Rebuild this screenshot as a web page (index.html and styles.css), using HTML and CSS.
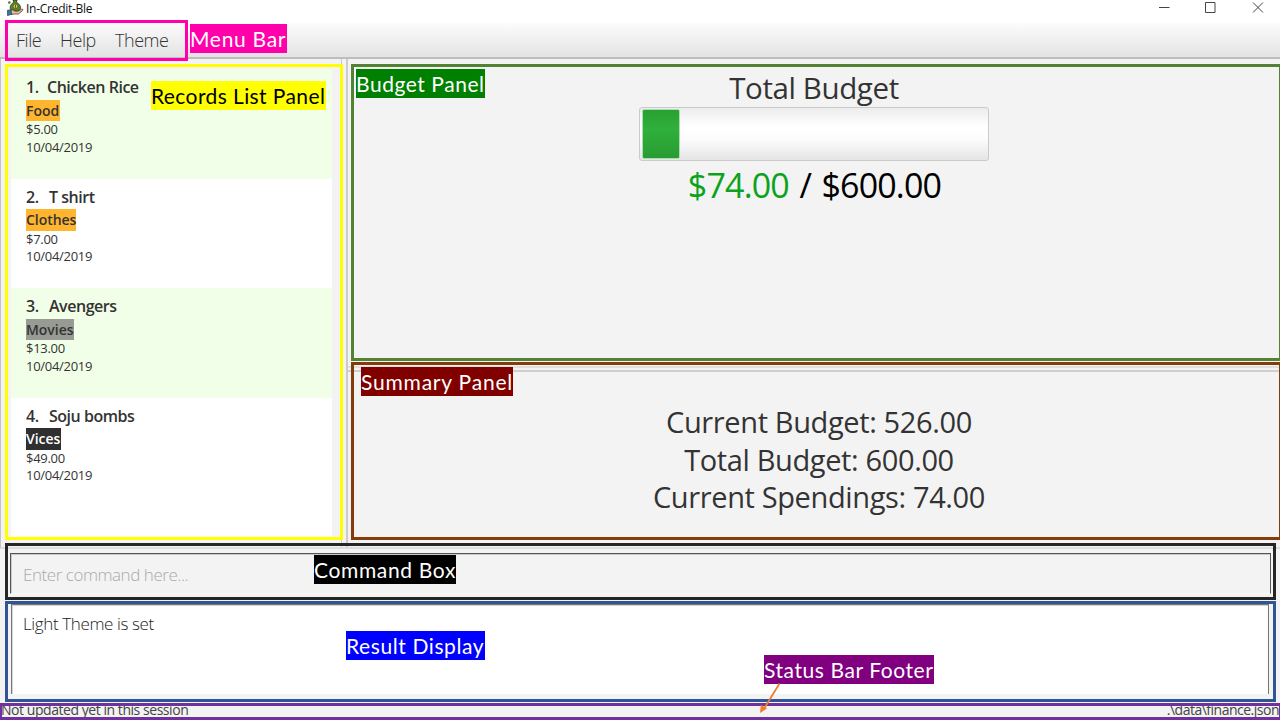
FILE: index.html
```html
<!DOCTYPE html>
<html lang="en">
<head>
<meta charset="utf-8">
<title>In-Credit-Ble</title>
<link rel="stylesheet" href="styles.css">
</head>
<body>
<div class="window">
  <header class="titlebar">
    <svg class="logo" width="17" height="16" viewBox="0 0 17 16">
      <path d="M6 0h4l-.6 2.2C12 3.500 13.800 6 13.500 8.300 13.200 10.200 11.500 11 8.500 11S3.300 10 3.200 8.200C3 6 4.500 3.500 6.800 2.200z" fill="#4f8a2c" stroke="#26301c" stroke-width=".8"/>
      <circle cx="8.500" cy="6.300" r="2.300" fill="#e8c648" stroke="#38501d" stroke-width=".6"/>
      <path d="M8.500 4.800v3" stroke="#4a4a20" stroke-width=".9"/>
      <circle cx="2.300" cy="2.500" r="1.300" fill="#54702f"/>
      <path d="M3.500 10.500c2-1.200 3.500-.3 4.500.7h3l3.500-2c1.300-.5 1.900.5 1 1.400L11.500 14H7l-3 .7z" fill="#eeb88e" stroke="#3c2b24" stroke-width=".7"/>
      <path d="M.3 10.300l3.400-.5 1.100 4.300L.5 15.700z" fill="#2e78a8" stroke="#24313c" stroke-width=".6"/>
    </svg>
    <span class="app-name">In-Credit-Ble</span>
    <div class="controls">
      <svg width="110" height="16" viewBox="0 0 110 16" fill="none" stroke="#444" stroke-width="1">
        <path d="M0 7.500h10.500M46.500 2.500h9.500v10h-9.500zM94 2.500l10 10M104 2.500l-10 10"/>
      </svg>
    </div>
  </header>

  <nav class="menubar">
    <span class="menu-file">File</span><span class="menu-help">Help</span><span>Theme</span>
  </nav>

  <main class="content">
    <section class="records">
      <div class="list">
        <article class="record">
          <h2><span class="index">1.</span>Chicken Rice</h2>
          <span class="tag food">Food</span>
          <p>$5.00</p><p>10/04/2019</p>
        </article>
        <article class="record">
          <h2><span class="index wide">2.</span>T shirt</h2>
          <span class="tag clothes">Clothes</span>
          <p>$7.00</p><p>10/04/2019</p>
        </article>
        <article class="record">
          <h2><span class="index wide">3.</span>Avengers</h2>
          <span class="tag movies">Movies</span>
          <p>$13.00</p><p>10/04/2019</p>
        </article>
        <article class="record">
          <h2><span class="index wide">4.</span>Soju bombs</h2>
          <span class="tag vices">Vices</span>
          <p>$49.00</p><p>10/04/2019</p>
        </article>
      </div>
    </section>
    <div class="divider-v"></div>
    <div class="side">
      <section class="budget">
        <h1>Total Budget</h1>
        <div class="progress"><div class="bar"></div></div>
        <div class="amount"><span class="spent">$74.00</span> / $600.00</div>
      </section>
      <div class="divider-h"></div>
      <section class="summary">
        <div>Current Budget: 526.00</div>
        <div>Total Budget: 600.00</div>
        <div>Current Spendings: 74.00</div>
      </section>
    </div>
  </main>

  <div class="command"><div class="command-field">Enter command here...</div></div>
  <div class="result"><div class="result-field">Light Theme is set</div></div>
  <footer class="statusbar"><span>Not updated yet in this session</span><span class="path">.\data\finance.json</span></footer>

  <div class="frame frame-menu"></div>
  <div class="frame frame-records"></div>
  <div class="frame frame-budget"></div>
  <div class="frame frame-summary"></div>
  <div class="frame frame-command"></div>
  <div class="frame frame-result"></div>
  <div class="frame frame-status"></div>
  <div class="label label-menu">Menu Bar</div>
  <div class="label label-records">Records List Panel</div>
  <div class="label label-budget">Budget Panel</div>
  <div class="label label-summary">Summary Panel</div>
  <div class="label label-command">Command Box</div>
  <div class="label label-result">Result Display</div>
  <div class="label label-status">Status Bar Footer</div>
  <svg class="arrow" width="24" height="32" viewBox="0 0 24 32">
    <path d="M19.500 0.500L4.500 25" stroke="#ed7d31" stroke-width="1.800" fill="none"/>
    <path d="M0 30L0.800 21.800L7 25.600z" fill="#ed7d31"/>
  </svg>
</div>
</body>
</html>
```

FILE: styles.css
```css
* { box-sizing: border-box; }
body { margin: 0; font-family: "Open Sans", "Noto Sans", sans-serif; color: #333; }
h1, h2, p { margin: 0; font-weight: 400; }
.window { position: relative; width: 1280px; height: 720px; overflow: hidden; background: #f3f3f3; display: flex; flex-direction: column; white-space: nowrap; }

.titlebar { height: 23px; background: #fff; display: flex; align-items: flex-start; padding-left: 7px; }
.logo { flex: none; }
.app-name { margin-left: 2px; font-size: 12px; line-height: 17px; letter-spacing: -0.27px; color: #111; }
.controls { margin-left: auto; width: 121px; height: 16px; }
.controls svg { display: block; }

.menubar { height: 36px; flex: none; background: linear-gradient(#fcfcfc, #e3e3e3); border-bottom: 2px solid #bdbdbd; display: flex; padding-left: 16px; font-size: 18px; font-weight: 300; line-height: 35px; letter-spacing: -0.45px; color: #333; }
.menu-file { width: 44px; }
.menu-help { width: 55px; }

.content { height: 490px; flex: none; display: flex; border-left: 1px solid #c4c4c4; border-bottom: 2px solid #dedede; }
.records { width: 341px; padding: 10px 10px 10px 10px; border-right: 1px solid #c8c8c8; }
.list { width: 321px; height: 468px; background: #fff; }
.record { height: 109.5px; padding: 6px 0 0 15px; }
.record:nth-child(odd) { background: #f2ffe8; }
.record h2 { height: 24.5px; line-height: 24px; font-size: 16px; font-weight: 600; letter-spacing: -0.47px; }
.index { display: inline-block; width: 21px; }
.wide { width: 23px; }
.tag { display: block; height: 21.5px; line-height: 21px; font-size: 14px; font-weight: 600; letter-spacing: -0.05px; background: #ffb52e; }
.record p { height: 17.5px; line-height: 17.5px; font-size: 13px; letter-spacing: -0.29px; }
.food { width: 34px; }
.clothes { width: 50px; }
.movies { width: 48px; background: #979b93; }
.vices { width: 35px; background: #2f2f2f; color: #fff; }
.divider-v { width: 6px; background: #f3f3f3; border-right: 2px solid #cbcbcb; }

.side { flex: 1; display: flex; flex-direction: column; }
.budget { height: 307px; display: flex; flex-direction: column; align-items: center; padding-top: 7px; }
.budget h1 { height: 41px; line-height: 43px; font-size: 29.5px; letter-spacing: -0.4px; }
.progress { width: 350px; height: 54px; padding: 1px 2px; border: 1px solid #cbcbcb; border-radius: 3px; background: linear-gradient(#ececec, #fff 35%, #fcfcfc 60%, #e5e5e5); }
.bar { width: 38px; height: 50px; border: 1px solid #a9dfad; border-radius: 2px; background: linear-gradient(#28a032, #30b03c 40%, #289c33); }
.amount { font-size: 34px; line-height: 48px; letter-spacing: -0.85px; word-spacing: 2.5px; color: #000; margin-left: 1px; }
.spent { color: #0ca31c; }
.divider-h { height: 6px; border-top: 2px solid #e0e0e0; border-bottom: 2px solid #cfcfcf; }
.summary { padding: 31px 0 0 10px; text-align: center; font-size: 29px; line-height: 37.5px; letter-spacing: -0.37px; }

.command { height: 51px; flex: none; padding: 4px 9px 0 10px; }
.command-field { height: 41px; border: 1px solid #555; border-bottom-color: #f9f9f9; box-shadow: inset 1px 1px #c9c9c9; padding-left: 12px; font-size: 17px; font-weight: 300; line-height: 41px; letter-spacing: -0.45px; color: #aaa; }
.result { height: 102px; flex: none; padding: 4px 11px 0 11px; }
.result-field { height: 90px; background: #fff; border: 1px solid #777; border-bottom: 0; box-shadow: inset 1px 1px #d5d5d5; padding-left: 11px; font-size: 17px; font-weight: 300; line-height: 38px; letter-spacing: -0.38px; color: #222; }
.statusbar { height: 18px; flex: none; display: flex; justify-content: space-between; padding: 0 1px; font-size: 14px; line-height: 15px; letter-spacing: -0.45px; color: #444; }
.path { letter-spacing: -0.5px; }

/* Coloured outlines over each region */
.frame { position: absolute; border: 3px solid; }
.frame-menu { left: 5px; top: 20px; width: 183px; height: 41px; border-color: #ff00aa; }
.frame-records { left: 5px; top: 64px; width: 338px; height: 476px; border-color: #ff0; }
.frame-budget { left: 351px; top: 64px; width: 931px; height: 297px; border-color: #548235; }
.frame-summary { left: 351px; top: 362px; width: 931px; height: 178px; border-color: #843c0c; }
.frame-command { left: 5px; top: 543px; width: 1271px; height: 57px; border-color: #262626; }
.frame-result { left: 5px; top: 601px; width: 1271px; height: 101px; border-color: #2f5597; }
.frame-status { left: -1px; top: 703px; width: 1283px; height: 17px; border-color: #7030a0; }

/* Region captions */
.label { position: absolute; height: 29px; font: 400 21px/29px Lato, "Open Sans", sans-serif; color: #fff; }
.label-menu { left: 190px; top: 24px; width: 97px; background: #ff00aa; letter-spacing: .7px; }
.label-records { left: 151px; top: 81px; width: 175px; background: #ff0; color: #000; letter-spacing: .4px; }
.label-budget { left: 356px; top: 69px; width: 129px; background: #008000; letter-spacing: .55px; }
.label-summary { left: 361px; top: 367px; width: 152px; background: #800000; letter-spacing: .8px; }
.label-command { left: 314px; top: 555px; width: 142px; background: #000; letter-spacing: .65px; }
.label-result { left: 346px; top: 631px; width: 139px; background: #00f; letter-spacing: .6px; }
.label-status { left: 764px; top: 655px; width: 170px; background: #800080; letter-spacing: .57px; }
.arrow { position: absolute; left: 760px; top: 683px; }
```
